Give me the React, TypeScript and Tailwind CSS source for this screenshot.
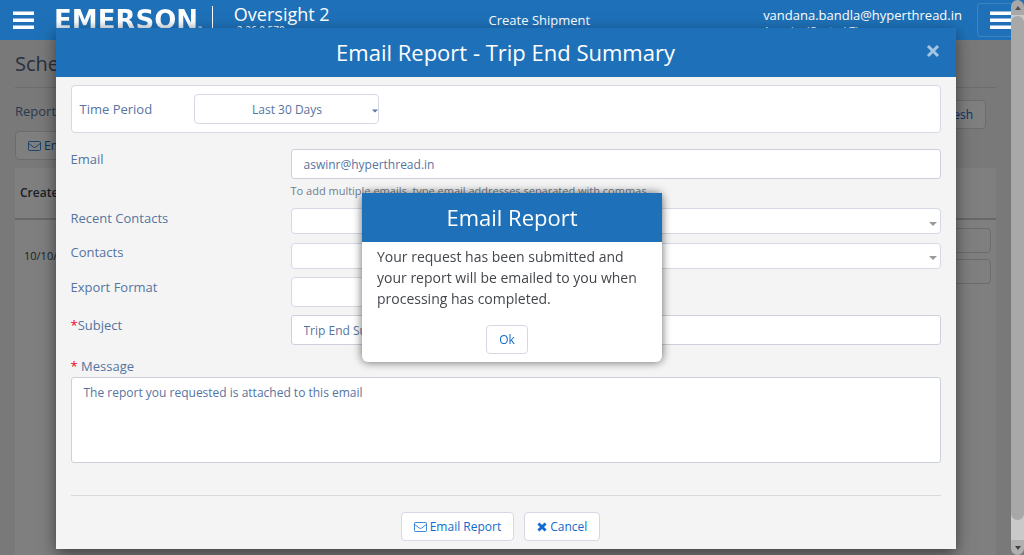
import { useState } from "react";
import type { ReactNode } from "react";

const card = "rounded border border-[#d5d9e5] bg-white";
const field = "w-full rounded-[3px] border border-[#cbd0da] bg-white px-3 text-xs text-[#56749f] outline-none";

function Bars() {
  return (
    <svg viewBox="0 0 21 18" className="h-[18px] w-[21px]" fill="#fff" aria-hidden="true">
      <rect y="0.5" width="21" height="3.5" />
      <rect y="7.5" width="21" height="3.5" />
      <rect y="14.5" width="21" height="3.5" />
    </svg>
  );
}

function Envelope() {
  return (
    <svg viewBox="0 0 13 11" className="h-[11px] w-[13px]" fill="none" stroke="currentColor" strokeWidth="0.8" aria-hidden="true">
      <rect x="0.5" y="1.5" width="12" height="9" rx="0.8" />
      <path d="M0.7 3.4 L5.2 7 Q6.5 7.9 7.8 7 L12.3 3.4" />
    </svg>
  );
}

function Cross({ className }: { className: string }) {
  return (
    <svg viewBox="0 0 14 14" className={className} stroke="currentColor" aria-hidden="true">
      <path d="M2 2l10 10M12 2L2 12" />
    </svg>
  );
}

function Caret({ className }: { className: string }) {
  return (
    <svg viewBox="0 0 8 4" className={`pointer-events-none absolute h-1 ${className}`} fill="currentColor" aria-hidden="true">
      <path d="M0 0h8L4 4z" />
    </svg>
  );
}

function Button({ children, onClick }: { children: ReactNode; onClick?: () => void }) {
  return (
    <button
      type="button"
      onClick={onClick}
      className={`${card} flex h-[29px] items-center gap-[3px] px-3 text-xs text-[#0f6bcd]`}
    >
      {children}
    </button>
  );
}

function Row({ label, id, required, children }: { label: string; id: string; required?: boolean; children: ReactNode }) {
  return (
    <div className="flex items-start">
      <label htmlFor={id} className="w-[220px] shrink-0 text-[13px] leading-5">
        {required && <span className="text-[#f00020]">*</span>}
        {label}
      </label>
      <div className="relative min-w-0 flex-1">{children}</div>
    </div>
  );
}

function Header() {
  return (
    <header className="relative z-10 flex h-10 shrink-0 items-start bg-[#1e71b9] text-white">
      <button type="button" aria-label="Menu" className="ml-[13px] mt-[11px]">
        <Bars />
      </button>
      <div className="ml-5 flex items-end pt-1.5">
        <span className="bg-linear-to-b from-white from-55% to-[#c3d3e2] bg-clip-text font-['DejaVu_Sans'] text-[26px] leading-7 font-bold text-transparent">
          EMERSON
        </span>
        <span className="text-[5px] leading-3">™</span>
      </div>
      <div className="mt-1.5 ml-2.5 h-7 w-px bg-white" />
      <div className="ml-[21px]">
        <div className="text-lg leading-7">Oversight 2</div>
        <div className="-mt-1 pl-[3px] text-[10px] leading-3">2.26.0.570</div>
      </div>
      <a href="#create" className="ml-auto pt-2.5 pl-1.5 text-[13px] leading-5">
        Create Shipment
      </a>
      <div className="mr-[15px] ml-auto pt-[5px] pl-5">
        <div className="text-[13px] leading-5">vandana.bandla@hyperthread.in</div>
        <div className="text-[11px] leading-3">America/Central Time</div>
      </div>
      <button
        type="button"
        aria-label="Options"
        className="mt-[3px] h-[34px] w-[34px] overflow-hidden rounded-l border border-r-0 border-[#3b85c5] pl-3"
      >
        <Bars />
      </button>
    </header>
  );
}

function ReportsPage() {
  return (
    <main className="flex flex-1 flex-col bg-[#f2f2f2] px-[15px] text-[#56749f]">
      <h1 className="mt-2.5 border-b border-[#d8d8d8] pb-[9px] text-xl leading-7 text-[#55607f]">Scheduled Reports</h1>
      <div className="mt-3 flex justify-between pr-2.5">
        <span className="text-[13px] leading-[22px]">Report Type</span>
        <Button>Refresh</Button>
      </div>
      <div className="mt-0.5 flex">
        <Button>
          <Envelope />
          Email Report
        </Button>
      </div>
      <div className="mt-2 flex-1 bg-white">
        <table className="w-full text-left text-xs text-[#3a3f4a]">
          <thead>
            <tr className="h-[51px] border-b-2 border-[#d0d0d0]">
              <th className="pl-[5px] font-semibold">Created Date</th>
              <th aria-label="Actions" />
            </tr>
          </thead>
          <tbody>
            <tr>
              <td className="pl-[9px] text-[11px]">10/10/2022</td>
              <td className="w-40 py-2 pr-[5px]">
                <button type="button" aria-label="Edit" className={`${card} block h-[25px] w-full`} />
                <button type="button" aria-label="Delete" className={`${card} mt-1.5 block h-[25px] w-full`} />
              </td>
            </tr>
          </tbody>
        </table>
      </div>
    </main>
  );
}

function Scrollbar() {
  return (
    <div className="flex w-[13px] shrink-0 flex-col bg-[#c9c9c9]" aria-hidden="true">
      <div className="bg-[#1e71b9]">
        <div className="flex h-[15px] items-center justify-center rounded-t-full bg-[#a8a8a8]">
          <svg viewBox="0 0 6 4" className="h-1 w-1.5" fill="#505050">
            <path d="M3 0l3 4H0z" />
          </svg>
        </div>
      </div>
      <div className="mt-px mb-5 flex-1 rounded-full bg-[#a8a8a8]" />
      <div className="bg-[#797979]">
        <div className="flex h-[15px] items-center justify-center rounded-b-full bg-[#b0b0b0]">
          <svg viewBox="0 0 6 4" className="h-1 w-1.5" fill="#404040">
            <path d="M3 4l3-4H0z" />
          </svg>
        </div>
      </div>
    </div>
  );
}

function EmailDialog() {
  return (
    <section
      role="dialog"
      aria-label="Email Report - Trip End Summary"
      className="w-[900px] bg-[#f4f4f4] text-[#56749f] shadow-[0_5px_15px_rgba(0,0,0,0.5)]"
    >
      <div className="relative bg-[#1e71b9] text-center text-white">
        <h2 className="pt-2 pb-[9px] text-[22px] leading-8">Email Report - Trip End Summary</h2>
        <button type="button" aria-label="Close" className="absolute top-4 right-4 text-[#a5c6e3]">
          <Cross className="h-3.5 w-3.5 stroke-3" />
        </button>
      </div>
      <form className="px-[15px] pt-2 pb-2">
        <div className={`${card} flex h-12 items-center px-2`}>
          <label htmlFor="period" className="w-[114px] pt-0.5 text-[13px]">
            Time Period
          </label>
          <div className="relative w-[185px]">
            <select
              id="period"
              className={`${card} h-[30px] w-full appearance-none pt-0.5 pl-0.5 text-center text-xs outline-none`}
            >
              <option>Last 30 Days</option>
            </select>
            <Caret className="top-[15px] right-px w-1.5" />
          </div>
        </div>
        <div className="mt-4 flex flex-col gap-2">
          <Row label="Email" id="email">
            <input id="email" className={`${field} block h-[30px]`} defaultValue="aswinr@hyperthread.in" />
            <p className="mt-[3px] text-[11px] leading-[18px] text-[#6f7c8c]">
              To add multiple emails, type email addresses separated with commas.
            </p>
          </Row>
          <Row label="Recent Contacts" id="recent">
            <select id="recent" className={`${card} block h-[26px] w-full appearance-none`} />
            <Caret className="top-3.5 right-1 w-2 text-[#999]" />
          </Row>
          <Row label="Contacts" id="contacts">
            <select id="contacts" className={`${card} mt-px block h-[26px] w-full appearance-none`} />
            <Caret className="top-3.5 right-1 w-2 text-[#999]" />
          </Row>
          <Row label="Export Format" id="format">
            <select id="format" className={`${card} block h-[30px] w-[185px] appearance-none`} />
          </Row>
          <Row label="Subject" id="subject" required>
            <input id="subject" className={`${field} block h-[30px]`} defaultValue="Trip End Summary" />
          </Row>
        </div>
        <label htmlFor="message" className="mt-[11px] block text-[13px] leading-5">
          <span className="text-[#f00020]">*</span> Message
        </label>
        <textarea
          id="message"
          className={`${field} mt-px block h-[86px] resize-none py-1.5 leading-[18px]`}
          defaultValue="The report you requested is attached to this email"
        />
        <div className="mt-8 flex justify-center gap-2.5 border-t border-[#d9d9d9] pt-4 pr-2.5">
          <Button>
            <Envelope />
            Email Report
          </Button>
          <Button>
            <Cross className="h-2.5 w-2.5 stroke-4" />
            Cancel
          </Button>
        </div>
      </form>
    </section>
  );
}

function Confirmation({ onClose }: { onClose: () => void }) {
  return (
    <div className="fixed inset-0 z-30 grid place-items-center">
      <section role="alertdialog" aria-label="Email Report" className="w-[300px] rounded-md bg-white shadow-[0_0_10px_rgba(0,0,0,0.6)]">
        <h2 className="bg-[#1e71b9] pt-2 pb-[9px] text-center text-[22px] leading-8 text-white">Email Report</h2>
        <p className="px-[15px] pt-1 text-sm leading-[21px] text-[#43474c]">
          Your request has been submitted and your report will be emailed to you when processing has completed.
        </p>
        <div className="flex justify-center pt-4 pb-2 pr-2.5">
          <Button onClick={onClose}>Ok</Button>
        </div>
      </section>
    </div>
  );
}

export default function App() {
  const [confirmed, setConfirmed] = useState(true);
  return (
    <div className="flex h-screen overflow-hidden font-['Open_Sans',sans-serif]">
      <div className="relative flex min-w-0 flex-1 flex-col">
        <Header />
        <ReportsPage />
        <div className="absolute inset-x-0 top-10 bottom-0 bg-black/50" />
        <div className="absolute inset-0 z-20 flex items-start justify-center pt-7">
          <EmailDialog />
        </div>
      </div>
      <Scrollbar />
      {confirmed && <Confirmation onClose={() => setConfirmed(false)} />}
    </div>
  );
}
